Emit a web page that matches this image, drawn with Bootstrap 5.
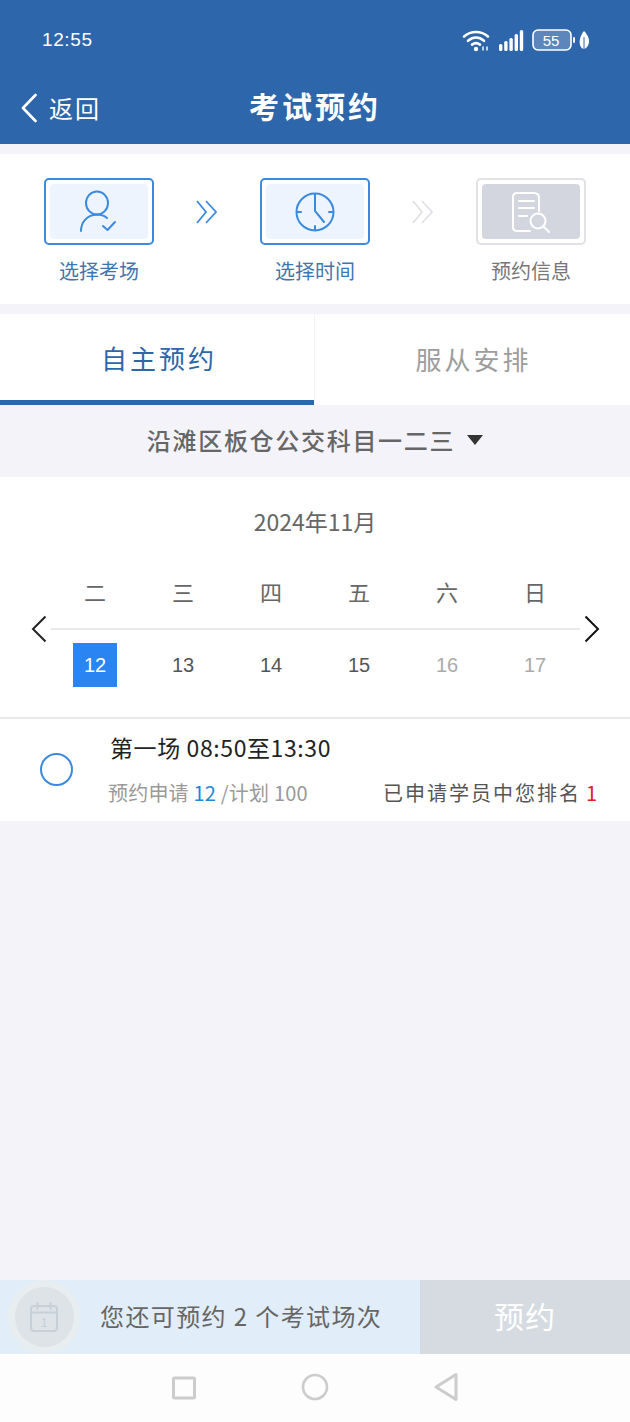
<!DOCTYPE html>
<html lang="zh-CN">
<head>
    <meta charset="UTF-8">
    <meta name="viewport" content="width=device-width, initial-scale=1.0">
    <title>考试预约</title>
    <link href="https://cdn.jsdelivr.net/npm/bootstrap@5.3.0/dist/css/bootstrap.min.css" rel="stylesheet">
    <style>
        html, body { height: 100%; }
        body {
            font-family: "Noto Sans CJK SC", "Liberation Sans", sans-serif;
            background: #f3f3f9;
            overflow: hidden;
        }
        .page-wrap { height: 1422px; }

        /* 顶部 */
        .blue-top { background: #2d66aa; color: #fff; height: 144px; }
        .status-row { height: 72px; padding: 8px 40px 0 42px; }
        .status-time { font-size: 19px; font-family: "Liberation Sans", sans-serif; letter-spacing: .6px; }
        .title-row { height: 72px; padding-left: 21px; position: relative; }
        .back-text { font-size: 24px; margin-left: 12px; letter-spacing: 2px; }
        .page-title {
            position: absolute; left: 0; right: 0; top: 0; line-height: 66px;
            text-align: center; font-size: 30px; font-weight: 700; letter-spacing: 3px;
        }

        /* 步骤 */
        .steps-box { height: 150px; margin-top: 10px; background: #fff; padding: 24px 0 0 44px; }
        .step-item { width: 110px; }
        .step-frame {
            height: 67px; border: 2px solid #3a8ae0; border-radius: 5px; padding: 4px;
        }
        .step-inner { height: 100%; background: #edf4fe; border-radius: 4px; }
        .step-off .step-frame { border-color: #e1e2e6; }
        .step-off .step-inner { background: #d3d6de; }
        .step-label { font-size: 20px; line-height: 28px; margin-top: 12px; color: #3f75b0; white-space: nowrap; }
        .step-off .step-label { color: #777; }
        .step-arrow { width: 106px; height: 67px; }

        /* 选项卡 */
        .tab-bar { height: 91px; margin-top: 10px; background: #fff; }
        .tab-one {
            flex: 1 1 0; font-size: 26px; letter-spacing: 3px; color: #9d9d9d;
            padding-bottom: 3px;
        }
        .tab-one + .tab-one { border-left: 1px solid #f4f4f6; padding-left: 2px; }
        .tab-on { flex: 0 0 314px; color: #2d66aa; border-bottom: 5px solid #2d66aa; padding-bottom: 0; padding-left: 4px; }

        .place-bar { height: 72px; color: #666; font-size: 24px; font-weight: 500; letter-spacing: 1.7px; padding-bottom: 3px; }
        .place-caret {
            width: 0; height: 0; margin-left: 12px;
            border-left: 8px solid transparent; border-right: 8px solid transparent; border-top: 10px solid #333;
        }

        /* 日历 */
        .cal-box { height: 240px; background: #fff; position: relative; }
        .cal-title { height: 92px; font-size: 23px; color: #666; line-height: 88px; text-align: center; }
        .cal-cols { padding: 0 51px; }
        .cal-col { width: 88px; text-align: center; }
        .week-row { height: 59px; font-size: 22px; color: #666; line-height: 45px; }
        .cal-line { height: 2px; margin: 0 50px 0 51px; background: #e9e9e9; }
        .date-row { margin-top: 13px; font-size: 20px; color: #555; line-height: 44px; font-family: "Liberation Sans", sans-serif; }
        .date-mute { color: #aaa; }
        .date-on { display: block; width: 44px; margin: 0 auto; background: #2a85f2; color: #fff; }
        .cal-prev, .cal-next { position: absolute; top: 138px; }
        .cal-prev { left: 31px; }
        .cal-next { left: 584px; }

        /* 场次 */
        .session-box { height: 104px; background: #fff; border-top: 2px solid #e9e9ea; }
        .radio-ring { width: 33px; height: 33px; border: 2px solid #3a8ae0; border-radius: 50%; margin: 34px 36px 0 40px; flex: none; }
        .session-name { font-size: 23px; color: #222; line-height: 30px; margin-top: 13px; margin-left: 1px; letter-spacing: .6px; white-space: nowrap; }
        .session-sub { margin-top: 16px; font-size: 20px; line-height: 30px; color: #999; margin-left: -1px; letter-spacing: .2px; white-space: nowrap; }
        .session-rank { position: absolute; left: 383px; color: #555; letter-spacing: 2px; }
        .num-blue { color: #1f86d8; }
        .num-red { color: #e0202a; margin-left: 5px; }

        /* 底部 */
        .foot-bar { height: 74px; }
        .foot-left { width: 420px; background: #e1edf9; }
        .foot-ring {
            width: 72px; height: 74px; border-radius: 50%; background: #e8eeef; margin-left: 8px; flex: none;
        }
        .foot-disc { width: 59px; height: 60px; border-radius: 50%; background: #dde3e6; }
        .foot-text { font-size: 24px; color: #666; margin-left: 20px; letter-spacing: 1.4px; line-height: 30px; padding-bottom: 2px; white-space: nowrap; }
        .foot-btn { width: 210px; background: #d5dbe1; color: #fff; font-size: 30px; letter-spacing: 1px; padding-bottom: 3px; }
        .nav-bar { height: 68px; background: #fdfdfd; padding-bottom: 2px; }
        .nav-slot { width: 131px; }
    </style>
</head>
<body>
<div class="page-wrap d-flex flex-column">
    <div class="blue-top">
        <div class="status-row d-flex justify-content-between align-items-center">
            <span class="status-time">12:55</span>
            <div class="d-flex align-items-center">
                <svg width="28" height="24" viewBox="0 0 28 24" fill="none" stroke="#fff" stroke-width="2.6" stroke-linecap="round">
                    <path d="M2 8.500C9 2.500 19 2.500 26 8.500"/>
                    <path d="M6 12.800C11 8.600 17 8.600 22 12.800"/>
                    <path d="M10 16.600C12.500 14.800 15.500 14.800 18 16.600"/>
                    <circle cx="14" cy="21" r="2.200" fill="#fff" stroke="none"/>
                    <path d="M21 19v3M25 19v3" stroke-width="1.400"/>
                </svg>
                <svg class="ms-2" width="26" height="22" viewBox="0 0 26 22" fill="#fff">
                    <rect x="1" y="15" width="3.400" height="7" rx="1.500"/>
                    <rect x="6.200" y="12" width="3.400" height="10" rx="1.500"/>
                    <rect x="11.400" y="9" width="3.400" height="13" rx="1.500"/>
                    <rect x="16.600" y="5" width="3.400" height="17" rx="1.500"/>
                    <rect x="21.800" y="1" width="3.400" height="21" rx="1.500"/>
                </svg>
                <svg class="ms-2" width="58" height="24" viewBox="0 0 58 24">
                    <rect x="1" y="2" width="38" height="20" rx="5" fill="#5d86bd" stroke="#fff" stroke-width="1.600"/>
                    <text x="19" y="18" text-anchor="middle" fill="#fff" font-size="15" font-family="Liberation Sans">55</text>
                    <rect x="41" y="9" width="2" height="6" rx="1" fill="#fff"/>
                    <path d="M52 3C48 8 47 13 48 17C49 20 51 21 52 21C55 20 57 17 57 13C57 9 54 5 52 3Z" fill="#fff"/>
                    <path d="M52 9V21" stroke="#2d66aa" stroke-width="1"/>
                </svg>
            </div>
        </div>
        <div class="title-row d-flex align-items-center">
            <svg width="16" height="30" viewBox="0 0 16 30" fill="none" stroke="#fff" stroke-width="2.600" stroke-linecap="round" stroke-linejoin="round"><path d="M14.500 2L2 15L14.500 28"/></svg>
            <span class="back-text">返回</span>
            <div class="page-title">考试预约</div>
        </div>
    </div>

    <div class="steps-box d-flex">
        <div class="step-item text-center">
            <div class="step-frame">
                <div class="step-inner d-flex align-items-center justify-content-center">
                    <svg width="44" height="44" viewBox="0 0 44 44" fill="none" stroke="#3a8ae0" stroke-width="2" stroke-linecap="round" stroke-linejoin="round">
                        <ellipse cx="20" cy="13" rx="11" ry="11.500"/>
                        <path d="M4 41C4 32 10 25 20 24.500C24 24.500 27 25.500 30 28"/>
                        <path d="M26 36L30.500 40L38 32"/>
                    </svg>
                </div>
            </div>
            <div class="step-label">选择考场</div>
        </div>
        <div class="step-arrow d-flex align-items-center justify-content-center">
            <svg width="24" height="26" viewBox="0 0 24 26" fill="none" stroke="#3a8ae0" stroke-width="1.800"><path d="M2 2L11 13L2 24M11 2L21 13L11 24"/></svg>
        </div>
        <div class="step-item text-center">
            <div class="step-frame">
                <div class="step-inner d-flex align-items-center justify-content-center">
                    <svg width="40" height="40" viewBox="0 0 40 40" fill="none" stroke="#3a8ae0" stroke-width="2" stroke-linecap="round">
                        <circle cx="20" cy="20" r="18.500"/>
                        <path d="M20 2v17l9 11M2 20h4M34 20h4M20 34v4"/>
                    </svg>
                </div>
            </div>
            <div class="step-label">选择时间</div>
        </div>
        <div class="step-arrow d-flex align-items-center justify-content-center">
            <svg width="24" height="26" viewBox="0 0 24 26" fill="none" stroke="#e0e1e4" stroke-width="1.800"><path d="M2 2L11 13L2 24M11 2L21 13L11 24"/></svg>
        </div>
        <div class="step-item step-off text-center">
            <div class="step-frame">
                <div class="step-inner d-flex align-items-center justify-content-center">
                    <svg width="42" height="42" viewBox="0 0 42 42" fill="none" stroke="#fff" stroke-width="2" stroke-linecap="round" stroke-linejoin="round">
                        <path d="M20 40H7C4 40 3 38 3 36V6C3 3 5 2 7 2H24C27 2 29 3 29 7V20"/>
                        <path d="M9 10H24M9 17H24M9 25H17"/>
                        <circle cx="28" cy="30" r="7.500"/>
                        <path d="M33.500 35.500L39 41"/>
                    </svg>
                </div>
            </div>
            <div class="step-label">预约信息</div>
        </div>
    </div>

    <div class="tab-bar d-flex">
        <div class="tab-one tab-on d-flex align-items-center justify-content-center">自主预约</div>
        <div class="tab-one d-flex align-items-center justify-content-center">服从安排</div>
    </div>

    <div class="place-bar d-flex align-items-center justify-content-center">
        <span>沿滩区板仓公交科目一二三</span><span class="place-caret"></span>
    </div>

    <div class="cal-box">
        <div class="cal-title">2024年11月</div>
        <div class="cal-cols week-row d-flex">
            <div class="cal-col">二</div>
            <div class="cal-col">三</div>
            <div class="cal-col">四</div>
            <div class="cal-col">五</div>
            <div class="cal-col">六</div>
            <div class="cal-col">日</div>
        </div>
        <div class="cal-line"></div>
        <div class="cal-cols date-row d-flex">
            <div class="cal-col"><span class="date-on">12</span></div>
            <div class="cal-col">13</div>
            <div class="cal-col">14</div>
            <div class="cal-col">15</div>
            <div class="cal-col date-mute">16</div>
            <div class="cal-col date-mute">17</div>
        </div>
        <svg class="cal-prev" width="16" height="28" viewBox="0 0 16 28" fill="none" stroke="#222" stroke-width="2"><path d="M14.500 1.500L2 14L14.500 26.500"/></svg>
        <svg class="cal-next" width="16" height="28" viewBox="0 0 16 28" fill="none" stroke="#111" stroke-width="2"><path d="M1.500 1.500L14 14L1.500 26.500"/></svg>
    </div>

    <div class="session-box d-flex">
        <div class="radio-ring"></div>
        <div class="flex-grow-1">
            <div class="session-name">第一场 08:50至13:30</div>
            <div class="session-sub">预约申请 <span class="num-blue">12</span> /计划 100<span class="session-rank">已申请学员中您排名<span class="num-red">1</span></span></div>
        </div>
    </div>

    <div class="flex-grow-1"></div>

    <div class="foot-bar d-flex">
        <div class="foot-left d-flex align-items-center">
            <div class="foot-ring d-flex align-items-center justify-content-center">
                <div class="foot-disc d-flex align-items-center justify-content-center">
                    <svg width="30" height="30" viewBox="0 0 30 30" fill="none" stroke="#c6d0d6" stroke-width="2" stroke-linecap="round">
                        <rect x="2" y="4" width="26" height="25" rx="3"/>
                        <path d="M2 10.500H28M8.500 1v6M21.500 1v6"/>
                        <text x="15" y="25" text-anchor="middle" font-size="12" fill="#c6d0d6" stroke="none" font-family="Liberation Sans">1</text>
                    </svg>
                </div>
            </div>
            <span class="foot-text">您还可预约 2 个考试场次</span>
        </div>
        <div class="foot-btn d-flex align-items-center justify-content-center">预约</div>
    </div>

    <div class="nav-bar d-flex align-items-center justify-content-center">
        <div class="nav-slot text-center">
            <svg width="26" height="26" viewBox="0 0 26 26" fill="none" stroke="#ccc" stroke-width="3"><rect x="2.500" y="3" width="21" height="20" rx="1"/></svg>
        </div>
        <div class="nav-slot text-center">
            <svg width="28" height="28" viewBox="0 0 28 28" fill="none" stroke="#ccc" stroke-width="2.600"><circle cx="14" cy="14" r="12"/></svg>
        </div>
        <div class="nav-slot text-center">
            <svg width="26" height="30" viewBox="0 0 26 30" fill="none" stroke="#ccc" stroke-width="3" stroke-linejoin="round"><path d="M23 2.500L3 15L23 27.500Z"/></svg>
        </div>
    </div>
</div>
<script src="https://cdn.jsdelivr.net/npm/bootstrap@5.3.0/dist/js/bootstrap.bundle.min.js"></script>
</body>
</html>
